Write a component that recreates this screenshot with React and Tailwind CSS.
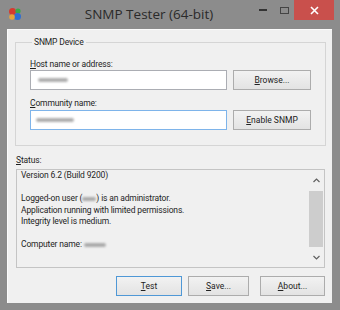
import React from "react";

function Blob({ w }) {
  return (
    <span
      className="inline-block align-middle h-[4px] bg-[#9a9a9a] blur-[1px] rounded-sm opacity-80"
      style={{ width: w }}
    />
  );
}

function Btn({ children, w, def }) {
  return (
    <div
      className={
        "flex items-center justify-center h-[20px] text-[8.5px] tracking-[0px] text-[#222] bg-gradient-to-b from-[#f2f2f2] to-[#e3e3e3] border " +
        (def ? "border-[#4f98d6]" : "border-[#acacac]")
      }
      style={{ width: w }}
    >
      {children}
    </div>
  );
}

function U({ children }) {
  return <span className="underline underline-offset-1">{children}</span>;
}

export default function App() {
  return (
    <div
      className="w-[340px] h-[310px] bg-[#8c8c8c] flex flex-col overflow-hidden"
      style={{ fontFamily: 'Roboto, "Open Sans", sans-serif' }}
    >
      {/* title bar */}
      <div className="h-[29px] flex items-start relative shrink-0">
        <div className="w-[25px] h-[29px] flex items-center justify-center pl-[4px] pb-[2px]">
          <svg width="14" height="14" viewBox="0 0 14 14">
            <circle cx="4.5" cy="4.5" r="3.5" fill="#d63a2e" />
            <circle cx="10" cy="4" r="2.6" fill="#3aa84a" />
            <circle cx="9.5" cy="9.5" r="3.5" fill="#2f6fd0" />
            <circle cx="4" cy="10" r="2.8" fill="#e8a23a" />
          </svg>
        </div>
        <div
          className="flex-1 h-[29px] flex items-center justify-center pl-[24px] text-[13.5px] text-[#2a2a2a]"
          style={{ fontFamily: '"Open Sans", sans-serif' }}
        >
          SNMP Tester (64-bit)
        </div>
        <div className="flex items-start h-[20px]">
          <div className="w-[28px] h-[20px] flex items-center justify-center">
            <div className="w-[8px] h-[2px] bg-[#333]" />
          </div>
          <div className="w-[14px] h-[20px] flex items-center justify-center">
            <div className="w-[9px] h-[7px] border border-[#444]" />
          </div>
          <div className="w-[40px] h-[20px] ml-[3px] mr-[6px] bg-[#c9504c] flex items-center justify-center">
            <svg width="9" height="9" viewBox="0 0 9 9">
              <path d="M1 1 L8 8 M8 1 L1 8" stroke="#fff" strokeWidth="1.6" />
            </svg>
          </div>
        </div>
      </div>

      {/* client */}
      <div className="ml-[7px] mr-[8px] mb-[7px] flex-1 bg-[#f0f0f0] border-l border-t border-[#fbfbfb] flex flex-col text-[8.5px] tracking-[-0.15px] text-[#1e1e1e]">
        <fieldset className="ml-[7px] mr-[7px] mt-[6px] border border-[#d5d5d5] h-[110px] px-[14px] pb-[0px]">
          <legend className="ml-[2px] px-[2px] leading-[12px]">SNMP Device</legend>
          <div className="mt-[10px] leading-[12px]">
            <U>H</U>ost name or address:
          </div>
          <div className="flex items-center gap-[6px]">
            <div className="w-[197px] h-[20px] bg-white border border-[#abadb3] flex items-center pl-[7px]">
              <Blob w={30} />
            </div>
            <Btn w={78}>
              <span>
                <U>B</U>rowse...
              </span>
            </Btn>
          </div>
          <div className="mt-[7px] leading-[12px]">
            <U>C</U>ommunity name:
          </div>
          <div className="flex items-center mt-[1px] gap-[6px]">
            <div className="w-[197px] h-[20px] bg-white border border-[#7eb4ea] flex items-center pl-[5px]">
              <Blob w={38} />
            </div>
            <Btn w={78}>
              <span>
                <U>E</U>nable SNMP
              </span>
            </Btn>
          </div>
        </fieldset>

        <div className="ml-[8px] mt-[8px] leading-[12px]">
          <U>S</U>tatus:
        </div>
        <div className="ml-[8px] mr-[7px] mt-[3px] h-[99px] border border-[#c4c4c4] flex">
          <div className="flex-1 pl-[4px] leading-[11.5px]">
            <div>Version 6.2 (Build 9200)</div>
            <div>&nbsp;</div>
            <div>
              Logged-on user (<Blob w={14} />) is an administrator.
            </div>
            <div>Application running with limited permissions.</div>
            <div>Integrity level is medium.</div>
            <div>&nbsp;</div>
            <div>
              Computer name: <Blob w={22} />
            </div>
          </div>
          <div className="w-[16px] flex flex-col items-center">
            <div className="h-[20px] flex items-center justify-center">
              <svg width="7" height="5" viewBox="0 0 7 5">
                <path d="M0.5 4 L3.5 1 L6.5 4" stroke="#606060" strokeWidth="1.2" fill="none" />
              </svg>
            </div>
            <div className="flex-1 w-full px-[1px] pt-[1px]">
              <div className="h-[56px] bg-[#cdcdcd]" />
            </div>
            <div className="h-[20px] flex items-center justify-center">
              <svg width="7" height="5" viewBox="0 0 7 5">
                <path d="M0.5 1 L3.5 4 L6.5 1" stroke="#606060" strokeWidth="1.2" fill="none" />
              </svg>
            </div>
          </div>
        </div>

        <div className="flex mt-[8px] ml-[108px]">
          <Btn w={66} def>
            <span>
              <U>T</U>est
            </span>
          </Btn>
          <div className="ml-[6px]">
            <Btn w={61}>
              <span>
                <U>S</U>ave...
              </span>
            </Btn>
          </div>
          <div className="ml-[11px]">
            <Btn w={65}>
              <span>
                <U>A</U>bout...
              </span>
            </Btn>
          </div>
        </div>
      </div>
    </div>
  );
}
